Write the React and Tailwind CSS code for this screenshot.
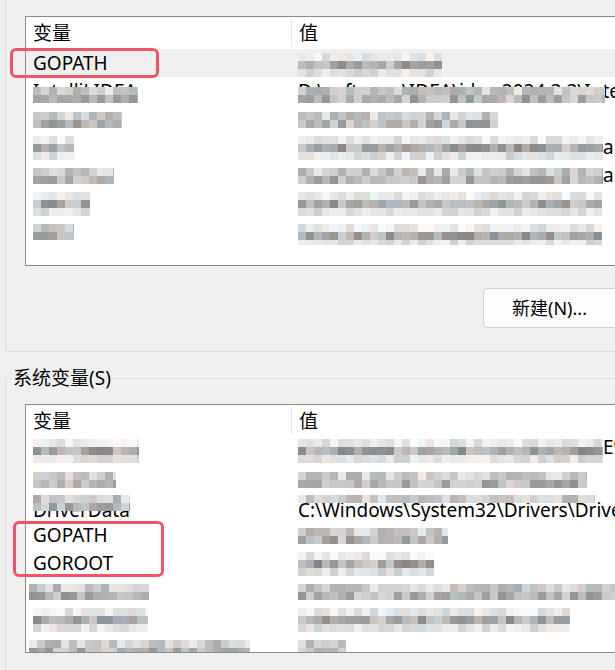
import React from "react";

function rng(seed) {
  let a = seed >>> 0;
  return () => {
    a |= 0;
    a = (a + 0x6d2b79f5) | 0;
    let t = Math.imul(a ^ (a >>> 15), 1 | a);
    t = (t + Math.imul(t ^ (t >>> 7), 61 | t)) ^ t;
    return ((t ^ (t >>> 14)) >>> 0) / 4294967296;
  };
}

const PAT = {
  1: [[176, 232]],
  2: [
    [172, 236],
    [145, 215],
  ],
  3: [
    [214, 252],
    [135, 208],
    [205, 244],
  ],
};

function Mosaic({ w, rows, seed, className = "" }) {
  const r = rng(seed);
  const n = Math.ceil(w / 8);
  const pat = PAT[rows];
  return (
    <div className={"flex shrink-0 flex-col overflow-hidden " + className} style={{ width: w }}>
      {pat.map(([lo, hi], i) => (
        <div key={i} className="flex">
          {Array.from({ length: n }, (_, j) => {
            const g = lo + r() * (hi - lo);
            const t = (r() - 0.5) * 16;
            const c = `rgb(${Math.min(255, g + t) | 0},${g | 0},${Math.min(255, g - t * 0.6) | 0})`;
            return <div key={j} className="h-2 w-2 shrink-0" style={{ background: c }} />;
          })}
        </div>
      ))}
    </div>
  );
}

function Row({ sel, name, value }) {
  return (
    <div className={"flex h-[28px] shrink-0 " + (sel ? "bg-[#efefef]" : "")}>
      <div className="relative flex w-[266px] shrink-0 items-start overflow-hidden whitespace-nowrap pl-[7px] leading-[28px]">
        {name}
      </div>
      <div className="relative flex min-w-0 flex-1 items-start overflow-hidden whitespace-nowrap pl-[6px] leading-[28px]">
        {value}
      </div>
    </div>
  );
}

function Header() {
  return (
    <div className="flex h-[32px] shrink-0 items-stretch">
      <div className="flex w-[265px] shrink-0 items-center pl-[7px]">变量</div>
      <div className="my-[2px] w-px bg-[#e5e5e5]" />
      <div className="flex items-center pl-[7px]">值</div>
    </div>
  );
}

function ListBox({ className, children }) {
  return (
    <div className={"flex w-[600px] flex-col overflow-hidden border border-[#8a8a8a] bg-white " + className}>
      <Header />
      {children}
    </div>
  );
}

export default function App() {
  return (
    <div className="relative h-[670px] w-[615px] overflow-hidden bg-[#f0f0f0] text-[19px] text-black font-['Noto_Sans','Noto_Sans_CJK_SC',sans-serif]">
      {/* 用户变量 group */}
      <div className="ml-[5px] w-[620px] border-b border-l border-[#dcdcdc] pb-[23px] pl-[19px] pt-[16px]">
        <ListBox className="h-[250px]">
          <Row sel name={<span>GOPATH</span>} value={<Mosaic w={144} rows={3} seed={11} className="mt-[4px]" />} />
          <Row
            name={
              <>
                <span>IntelliJ IDEA</span>
                <Mosaic w={105} rows={2} seed={12} className="absolute left-[7px] top-[10px]" />
              </>
            }
            value={
              <>
                <span>D:\software\IDEA\idea 2024.3.3\Intelli</span>
                <Mosaic w={307} rows={2} seed={13} className="absolute left-[6px] top-[10px]" />
              </>
            }
          />
          <Row
            name={<Mosaic w={89} rows={2} seed={14} className="mt-[7px]" />}
            value={<Mosaic w={200} rows={2} seed={15} className="mt-[7px]" />}
          />
          <Row
            name={<Mosaic w={41} rows={3} seed={16} className="mt-[3px]" />}
            value={
              <>
                <Mosaic w={305} rows={3} seed={17} className="mt-[3px]" />
                <span>ar</span>
              </>
            }
          />
          <Row
            name={<Mosaic w={81} rows={2} seed={18} className="mt-[7px]" />}
            value={
              <>
                <Mosaic w={305} rows={2} seed={19} className="mt-[7px]" />
                <span>ar</span>
              </>
            }
          />
          <Row
            name={<Mosaic w={57} rows={3} seed={20} className="mt-[3px]" />}
            value={<Mosaic w={304} rows={3} seed={21} className="mt-[3px]" />}
          />
          <Row
            name={<Mosaic w={41} rows={2} seed={22} className="mt-[7px]" />}
            value={<Mosaic w={304} rows={3} seed={23} className="mt-[7px]" />}
          />
        </ListBox>
        <button className="ml-[458px] mt-[22px] block h-[40px] w-[140px] rounded-[4px] border border-[#d0d0d0] bg-[#fdfdfd] pl-[28px] text-left text-[18px] leading-[24px]">
          新建(N)...
        </button>
      </div>

      {/* 系统变量 group */}
      <div className="ml-[5px] mt-[26px] h-[400px] w-[620px] border-l border-t border-[#dcdcdc]">
        <div className="ml-[6px] -mt-[13px] w-fit bg-[#f0f0f0] px-px leading-[24px]">系统变量(S)</div>
        <ListBox className="ml-[19px] mt-[14px] h-[249px]">
          <Row
            name={<Mosaic w={106} rows={3} seed={31} className="mt-[2px]" />}
            value={
              <>
                <Mosaic w={305} rows={3} seed={32} className="mt-[2px]" />
                <span className="-mt-[4px]">E%</span>
              </>
            }
          />
          <Row
            name={<Mosaic w={83} rows={2} seed={33} className="mt-[7px]" />}
            value={<Mosaic w={289} rows={2} seed={34} className="mt-[7px]" />}
          />
          <Row
            name={
              <>
                <span className="mt-[3px]">DriverData</span>
                <Mosaic w={97} rows={2} seed={35} className="absolute left-[7px] top-[2px]" />
              </>
            }
            value={
              <>
                <span className="mt-[3px]">C:\Windows\System32\Drivers\DriverData</span>
                <Mosaic w={297} rows={1} seed={36} className="absolute left-[6px] top-[2px]" />
              </>
            }
          />
          <Row name={<span>GOPATH</span>} value={<Mosaic w={150} rows={2} seed={37} className="mt-[7px]" />} />
          <Row name={<span>GOROOT</span>} value={<Mosaic w={136} rows={3} seed={38} className="mt-[3px]" />} />
          <Row
            name={<Mosaic w={120} rows={2} seed={39} className="-ml-[4px] mt-[7px]" />}
            value={<Mosaic w={330} rows={2} seed={40} className="mt-[7px]" />}
          />
          <Row
            name={<Mosaic w={115} rows={3} seed={41} className="mt-[3px]" />}
            value={<Mosaic w={272} rows={3} seed={42} className="mt-[3px]" />}
          />
          <Row
            name={<Mosaic w={221} rows={2} seed={43} className="-ml-[4px] mt-[7px]" />}
            value={<Mosaic w={48} rows={2} seed={44} className="mt-[7px]" />}
          />
        </ListBox>
      </div>

      {/* annotation boxes */}
      <div className="pointer-events-none absolute left-[10px] top-[48px] h-[30px] w-[149px] rounded-[6px] border-[3px] border-[#ef5469]" />
      <div className="pointer-events-none absolute left-[13px] top-[521px] h-[56px] w-[151px] rounded-[6px] border-[3px] border-[#ef5469]" />
    </div>
  );
}
